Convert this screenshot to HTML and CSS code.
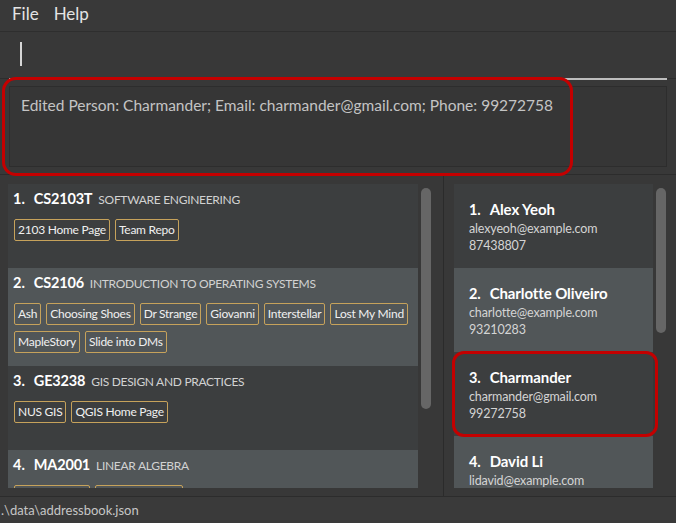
FILE: index.html
```html
<!DOCTYPE html>
<html>
<head>
<meta charset="utf-8">
<link rel="stylesheet" href="styles.css">
</head>
<body>
<div class="app">
  <div class="menubar"><span>File</span><span>Help</span></div>
  <div class="command"><div class="cmd-input"><span class="caret"></span></div></div>
  <div class="result"><div class="result-box">Edited Person: Charmander; Email: charmander@gmail.com; Phone: 99272758</div></div>
  <div class="main">
    <div class="left-panel">
      <div class="list">
        <div class="mod dark">
          <div class="mod-title"><span class="num">1.</span><span class="code">CS2103T</span><span class="desc">SOFTWARE ENGINEERING</span></div>
          <div class="tags"><span class="tag">2103 Home Page</span><span class="tag">Team Repo</span></div>
        </div>
        <div class="mod light">
          <div class="mod-title"><span class="num">2.</span><span class="code">CS2106</span><span class="desc">INTRODUCTION TO OPERATING SYSTEMS</span></div>
          <div class="tags"><span class="tag">Ash</span><span class="tag">Choosing Shoes</span><span class="tag">Dr Strange</span><span class="tag">Giovanni</span><span class="tag">Interstellar</span><span class="tag">Lost My Mind</span><span class="tag">MapleStory</span><span class="tag">Slide into DMs</span></div>
        </div>
        <div class="mod dark">
          <div class="mod-title"><span class="num">3.</span><span class="code">GE3238</span><span class="desc">GIS DESIGN AND PRACTICES</span></div>
          <div class="tags"><span class="tag">NUS GIS</span><span class="tag">QGIS Home Page</span></div>
        </div>
        <div class="mod light">
          <div class="mod-title"><span class="num">4.</span><span class="code">MA2001</span><span class="desc">LINEAR ALGEBRA</span></div>
          <div class="tags"><span class="tag w76"></span><span class="tag w88"></span></div>
        </div>
      </div>
      <div class="scrollbar"><div class="thumb thumb-left"></div></div>
    </div>
    <div class="right-panel">
      <div class="list">
        <div class="person dark">
          <div class="name"><span class="num">1.</span>Alex Yeoh</div>
          <div class="info">alexyeoh@example.com</div>
          <div class="info">87438807</div>
        </div>
        <div class="person light">
          <div class="name"><span class="num">2.</span>Charlotte Oliveiro</div>
          <div class="info">charlotte@example.com</div>
          <div class="info">93210283</div>
        </div>
        <div class="person dark">
          <div class="name"><span class="num">3.</span>Charmander</div>
          <div class="info">charmander@gmail.com</div>
          <div class="info">99272758</div>
        </div>
        <div class="person light">
          <div class="name"><span class="num">4.</span>David Li</div>
          <div class="info">lidavid@example.com</div>
        </div>
      </div>
      <div class="scrollbar"><div class="thumb thumb-right"></div></div>
    </div>
  </div>
  <div class="status">.\data\addressbook.json</div>
  <div class="annot annot-result"></div>
  <div class="annot annot-person"></div>
</div>
</body>
</html>
```
FILE: styles.css
```css
html, body {
  margin: 0;
  padding: 0;
}
body {
  background: #383838;
  font-family: "Lato", "Open Sans", sans-serif;
  width: 676px;
  height: 523px;
  overflow: hidden;
}
.app {
  position: relative;
  display: flex;
  flex-direction: column;
  height: 523px;
}
.menubar {
  box-sizing: border-box;
  height: 32px;
  border-bottom: 1px solid #2e2e2e;
  display: flex;
  align-items: center;
  gap: 15px;
  padding: 0 0 4px 12px;
  font-size: 17px;
  color: #e4e4e4;
  background: #393939;
}
.command {
  box-sizing: border-box;
  height: 47px;
  padding: 4px 9px 0;
  border-bottom: 1px solid #2d2d2d;
}
.cmd-input {
  height: 36px;
  border-bottom: 2px solid #bdbdbd;
  padding-left: 11px;
}
.caret {
  display: block;
  width: 2px;
  height: 24px;
  margin-top: 6px;
  background: #d6d6d6;
}
.result {
  height: 96px;
  box-sizing: border-box;
  padding: 7px 9px 0;
  border-bottom: 1px solid #2c2c2c;
}
.result-box {
  height: 81px;
  box-sizing: border-box;
  border: 1px solid #2d2d2d;
  background: #363636;
  padding: 8px 11px;
  font-size: 15.5px;
  line-height: 20px;
  color: #c4c4c4;
}
.main {
  flex: 1;
  display: flex;
  min-height: 0;
}
.left-panel {
  box-sizing: border-box;
  width: 444px;
  border-right: 1px solid #2b2b2b;
  display: flex;
  gap: 3px;
  padding: 9px 12px 0 8px;
}
.right-panel {
  flex: 1;
  display: flex;
  gap: 3px;
  padding: 9px 10px 0 10px;
}
.list {
  flex: 1;
  height: 304px;
  overflow: hidden;
}
.scrollbar {
  width: 10px;
  padding-top: 4px;
}
.thumb {
  background: #666666;
  border-radius: 5px;
}
.thumb-left { height: 221px; }
.thumb-right { height: 145px; }
.dark { background: #3c3e3f; }
.light { background: #515658; }
.mod {
  box-sizing: border-box;
  min-height: 84px;
  padding: 5px 5px 13px 5px;
}
.mod-title {
  display: flex;
  align-items: baseline;
  line-height: 20px;
  color: #ffffff;
}
.num {
  font-weight: 700;
  font-size: 14.5px;
  margin-right: 9px;
  color: #ffffff;
}
.code {
  font-weight: 700;
  font-size: 14.5px;
  letter-spacing: -0.2px;
}
.desc {
  font-size: 12px;
  letter-spacing: -0.3px;
  color: #d2d2d2;
  margin-left: 6px;
}
.tags {
  display: flex;
  flex-wrap: wrap;
  gap: 6px 5px;
  margin-top: 9px;
  padding-left: 1px;
}
.tag {
  box-sizing: border-box;
  height: 22px;
  line-height: 20px;
  border: 1px solid #c6a25b;
  border-radius: 2px;
  padding: 0 3px;
  font-size: 12px;
  letter-spacing: -0.25px;
  color: #f0f0f0;
}
.w76 { width: 76px; }
.w88 { width: 88px; }
.person {
  box-sizing: border-box;
  height: 84px;
  padding: 15px 15px 0;
}
.name {
  font-weight: 700;
  font-size: 15px;
  letter-spacing: -0.1px;
  line-height: 20px;
  color: #ffffff;
}
.info {
  font-size: 12.5px;
  letter-spacing: -0.15px;
  line-height: 17px;
  color: #d4d4d4;
}
.status {
  height: 27px;
  box-sizing: border-box;
  border-top: 1px solid #2c2c2c;
  background: #3a3a3a;
  padding-left: 1px;
  font-size: 13px;
  line-height: 26px;
  color: #c6c6c6;
}
.annot {
  position: absolute;
  box-sizing: border-box;
  border: 3px solid #c40000;
}
.annot-result {
  left: 2px;
  top: 77px;
  width: 571px;
  height: 99px;
  border-radius: 14px;
}
.annot-person {
  left: 452px;
  top: 351px;
  width: 206px;
  height: 86px;
  border-radius: 12px;
}
```
